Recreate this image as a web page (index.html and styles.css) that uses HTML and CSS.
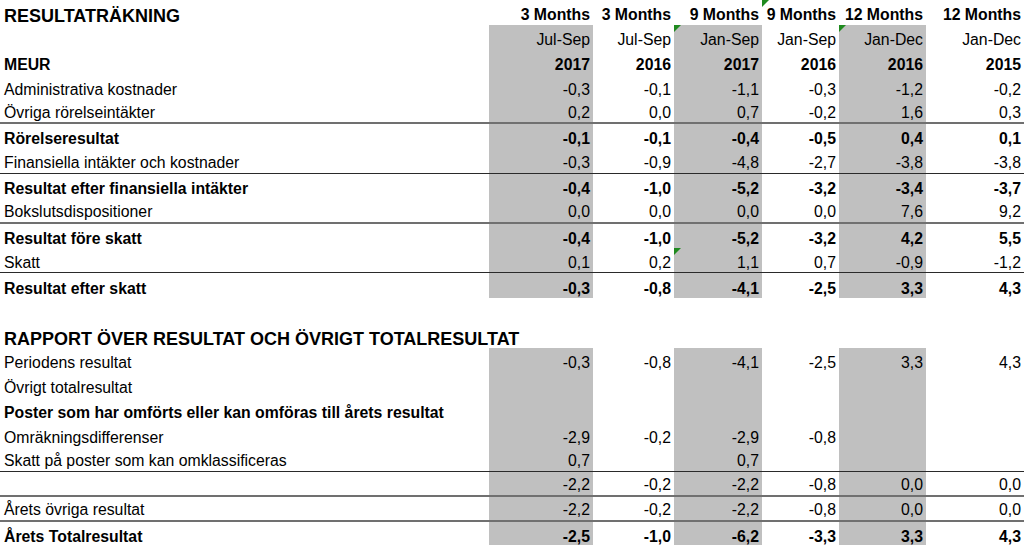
FILE: index.html
```html
<!DOCTYPE html>
<html lang="sv">
<head>
<meta charset="utf-8">
<title>Resultaträkning</title>
<link rel="stylesheet" href="styles.css">
</head>
<body>
<div class="sheet">
  <div class="row bold">
    <div class="c lab title">RESULTATRÄKNING</div>
    <div class="c">3 Months</div>
    <div class="c">3 Months</div>
    <div class="c">9 Months</div>
    <div class="c"><span class="tri"></span>9 Months</div>
    <div class="c">12 Months</div>
    <div class="c">12 Months</div>
  </div>
  <div class="row">
    <div class="c lab"></div>
    <div class="c g">Jul-Sep</div>
    <div class="c">Jul-Sep</div>
    <div class="c g"><span class="tri"></span>Jan-Sep</div>
    <div class="c">Jan-Sep</div>
    <div class="c g"><span class="tri"></span>Jan-Dec</div>
    <div class="c">Jan-Dec</div>
  </div>
  <div class="row bold">
    <div class="c lab">MEUR</div>
    <div class="c g">2017</div>
    <div class="c">2016</div>
    <div class="c g">2017</div>
    <div class="c">2016</div>
    <div class="c g">2016</div>
    <div class="c">2015</div>
  </div>
  <div class="row">
    <div class="c lab">Administrativa kostnader</div>
    <div class="c g">-0,3</div>
    <div class="c">-0,1</div>
    <div class="c g">-1,1</div>
    <div class="c">-0,3</div>
    <div class="c g">-1,2</div>
    <div class="c">-0,2</div>
  </div>
  <div class="row thick">
    <div class="c lab">Övriga rörelseintäkter</div>
    <div class="c g">0,2</div>
    <div class="c">0,0</div>
    <div class="c g">0,7</div>
    <div class="c">-0,2</div>
    <div class="c g">1,6</div>
    <div class="c">0,3</div>
  </div>
  <div class="row bold">
    <div class="c lab">Rörelseresultat</div>
    <div class="c g">-0,1</div>
    <div class="c">-0,1</div>
    <div class="c g">-0,4</div>
    <div class="c">-0,5</div>
    <div class="c g">0,4</div>
    <div class="c">0,1</div>
  </div>
  <div class="row thin">
    <div class="c lab">Finansiella intäkter och kostnader</div>
    <div class="c g">-0,3</div>
    <div class="c">-0,9</div>
    <div class="c g">-4,8</div>
    <div class="c">-2,7</div>
    <div class="c g">-3,8</div>
    <div class="c">-3,8</div>
  </div>
  <div class="row bold">
    <div class="c lab">Resultat efter finansiella intäkter</div>
    <div class="c g">-0,4</div>
    <div class="c">-1,0</div>
    <div class="c g">-5,2</div>
    <div class="c">-3,2</div>
    <div class="c g">-3,4</div>
    <div class="c">-3,7</div>
  </div>
  <div class="row thick">
    <div class="c lab">Bokslutsdispositioner</div>
    <div class="c g">0,0</div>
    <div class="c">0,0</div>
    <div class="c g">0,0</div>
    <div class="c">0,0</div>
    <div class="c g">7,6</div>
    <div class="c">9,2</div>
  </div>
  <div class="row bold">
    <div class="c lab">Resultat före skatt</div>
    <div class="c g">-0,4</div>
    <div class="c">-1,0</div>
    <div class="c g">-5,2</div>
    <div class="c">-3,2</div>
    <div class="c g">4,2</div>
    <div class="c">5,5</div>
  </div>
  <div class="row thin">
    <div class="c lab">Skatt</div>
    <div class="c g">0,1</div>
    <div class="c">0,2</div>
    <div class="c g"><span class="tri"></span>1,1</div>
    <div class="c">0,7</div>
    <div class="c g">-0,9</div>
    <div class="c">-1,2</div>
  </div>
  <div class="row bold">
    <div class="c lab">Resultat efter skatt</div>
    <div class="c g">-0,3</div>
    <div class="c">-0,8</div>
    <div class="c g">-4,1</div>
    <div class="c">-2,5</div>
    <div class="c g">3,3</div>
    <div class="c">4,3</div>
  </div>
  <div class="row">
    <div class="c lab"></div>
    <div class="c"></div>
    <div class="c"></div>
    <div class="c"></div>
    <div class="c"></div>
    <div class="c"></div>
    <div class="c"></div>
  </div>
  <div class="row bold">
    <div class="c lab title">RAPPORT ÖVER RESULTAT OCH ÖVRIGT TOTALRESULTAT</div>
    <div class="c"></div>
    <div class="c"></div>
    <div class="c"></div>
    <div class="c"></div>
    <div class="c"></div>
    <div class="c"></div>
  </div>
  <div class="row">
    <div class="c lab">Periodens resultat</div>
    <div class="c g">-0,3</div>
    <div class="c">-0,8</div>
    <div class="c g">-4,1</div>
    <div class="c">-2,5</div>
    <div class="c g">3,3</div>
    <div class="c">4,3</div>
  </div>
  <div class="row">
    <div class="c lab">Övrigt totalresultat</div>
    <div class="c g"></div>
    <div class="c"></div>
    <div class="c g"></div>
    <div class="c"></div>
    <div class="c g"></div>
    <div class="c"></div>
  </div>
  <div class="row">
    <div class="c lab b">Poster som har omförts eller kan omföras till årets resultat</div>
    <div class="c g"></div>
    <div class="c"></div>
    <div class="c g"></div>
    <div class="c"></div>
    <div class="c g"></div>
    <div class="c"></div>
  </div>
  <div class="row">
    <div class="c lab">Omräkningsdifferenser</div>
    <div class="c g">-2,9</div>
    <div class="c">-0,2</div>
    <div class="c g">-2,9</div>
    <div class="c">-0,8</div>
    <div class="c g"></div>
    <div class="c"></div>
  </div>
  <div class="row thin">
    <div class="c lab">Skatt på poster som kan omklassificeras</div>
    <div class="c g">0,7</div>
    <div class="c"></div>
    <div class="c g">0,7</div>
    <div class="c"></div>
    <div class="c g"></div>
    <div class="c"></div>
  </div>
  <div class="row thick">
    <div class="c lab"></div>
    <div class="c g">-2,2</div>
    <div class="c">-0,2</div>
    <div class="c g">-2,2</div>
    <div class="c">-0,8</div>
    <div class="c g">0,0</div>
    <div class="c">0,0</div>
  </div>
  <div class="row thick">
    <div class="c lab">Årets övriga resultat</div>
    <div class="c g">-2,2</div>
    <div class="c">-0,2</div>
    <div class="c g">-2,2</div>
    <div class="c">-0,8</div>
    <div class="c g">0,0</div>
    <div class="c">0,0</div>
  </div>
  <div class="row bold">
    <div class="c lab">Årets Totalresultat</div>
    <div class="c g">-2,5</div>
    <div class="c">-1,0</div>
    <div class="c g">-6,2</div>
    <div class="c">-3,3</div>
    <div class="c g">3,3</div>
    <div class="c">4,3</div>
  </div>
</div>
</body>
</html>
```

FILE: styles.css
```css
html, body {
  margin: 0;
  padding: 0;
  background: #ffffff;
}

body {
  font-family: "Liberation Sans", Arial, sans-serif;
  font-size: 15.8px;
  color: #000000;
  overflow: hidden;
}

.sheet {
  width: 1024px;
  display: flex;
  flex-direction: column;
}

.row {
  display: grid;
  grid-template-columns: 489px 104px 81px 88px 77px 87px 98px;
  height: 24.85px;
  box-sizing: border-box;
}

.row.thin {
  border-bottom: 1px solid #2a2a2a;
}

.row.thick {
  border-bottom: 2px solid #707070;
}

.bold,
.b {
  font-weight: bold;
}

.c {
  position: relative;
  display: flex;
  align-items: flex-end;
  justify-content: flex-end;
  padding: 0 3px 0.6px 0;
  line-height: 18px;
  white-space: nowrap;
  min-width: 0;
}

.c.lab {
  justify-content: flex-start;
  padding-left: 4px;
  padding-right: 0;
  overflow: visible;
  z-index: 1;
}

.c.title {
  font-size: 18px;
  padding-bottom: 0.3px;
}

.g {
  background: #c0c0c0;
}

.tri {
  position: absolute;
  left: 0;
  top: 0;
  width: 0;
  height: 0;
  border-top: 7px solid #1f8a1f;
  border-right: 7px solid transparent;
}
```
